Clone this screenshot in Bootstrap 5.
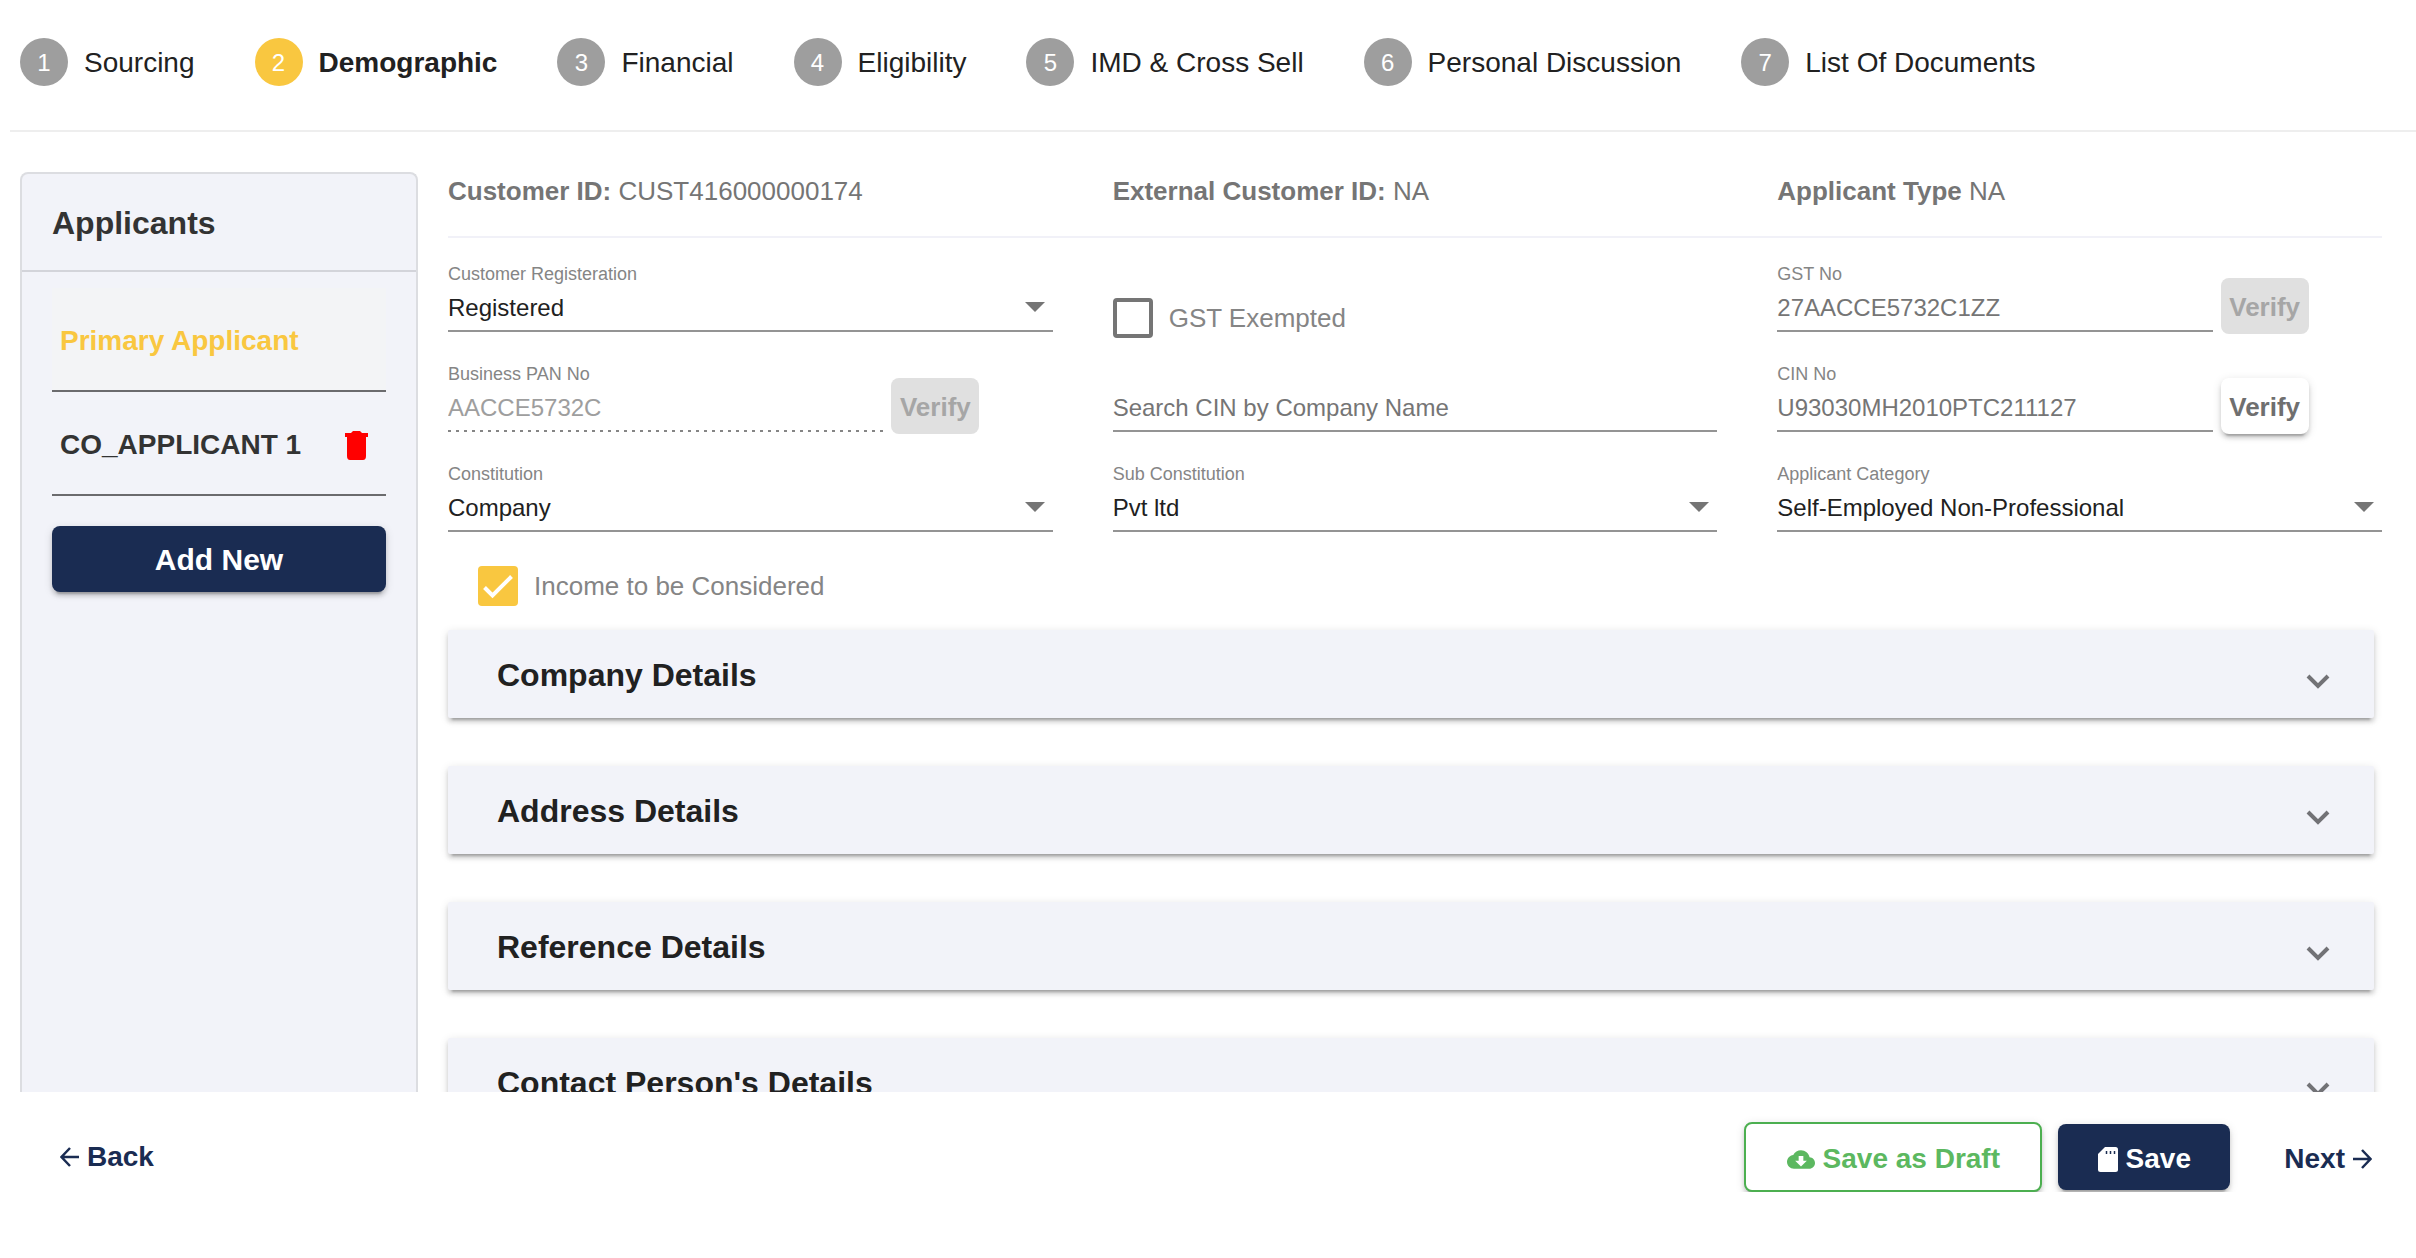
<!DOCTYPE html>
<html lang="en">
<head>
<meta charset="utf-8">
<meta name="viewport" content="width=device-width, initial-scale=1">
<title>Demographic</title>
<link href="https://cdn.jsdelivr.net/npm/bootstrap@5.3.0/dist/css/bootstrap.min.css" rel="stylesheet">
<style>
  :root { --navy: #1a2c52; --amber: #f9c740; --panel: #f2f3f9; --lift: 0 6px 2px -4px rgba(0,0,0,.2), 0 4px 4px 0 rgba(0,0,0,.14), 0 2px 10px 0 rgba(0,0,0,.12); }
  body { font-family: "Liberation Sans", Arial, sans-serif; color: #212121; background: #fff; }
  .stepper { height: 132px; margin-left: 10px; padding: 0 10px 6px; gap: 60px; border-bottom: 2px solid #eee; }
  .step-link { gap: 16px; font-size: 28px; line-height: 32px; color: #212121; text-decoration: none; white-space: nowrap; }
  .step-label { padding-top: 2px; }
  .step-num { width: 48px; height: 48px; padding-top: 2px; border-radius: 50%; background: #9e9e9e; color: #fff; font-size: 24px; }
  .step-link.active { font-weight: 700; }
  .step-link.active .step-num { background: var(--amber); font-weight: 400; }
  .workspace { padding: 40px 34px 0 20px; gap: 30px; min-height: 0; }
  .applicants { width: 398px; background: var(--panel); border: 2px solid #dcdde1; border-radius: 8px 8px 0 0; border-bottom: 0; }
  .applicants h2 { font-size: 32px; line-height: 36px; font-weight: 700; color: #333; padding: 31px 30px 29px; margin: 0; border-bottom: 2px solid #d3d4da; }
  .applicant-list { padding: 16px 30px 0; }
  .applicant-item { height: 104px; padding: 4px 18px 0 8px; border-bottom: 2px solid #6b6b6e; font-size: 28px; font-weight: 700; color: #333; }
  .applicant-item a { color: inherit; text-decoration: none; }
  .applicant-item.current { color: var(--amber); background: #f3f4f6; }
  .raised { border: 0; border-radius: 8px; box-shadow: var(--lift); font-weight: 700; font-size: 28px; line-height: 32px; }
  .navy-btn, .navy-btn:hover { background: var(--navy); color: #fff; height: 66px; }
  .add-btn { margin-top: 30px; padding-top: 8px; font-size: 30px; }
  .id-line { font-size: 26px; line-height: 30px; color: #757575; padding: 4px 0 30px; border-bottom: 2px solid #f1f1f8; }
  .wide-gutter { --bs-gutter-x: 60px; }
  .field-row { height: 100px; padding-top: 26px; }
  .field-row label.top { display: block; font-size: 18px; line-height: 20px; color: #858585; margin-bottom: 6px; }
  .field-row .line-field { display: block; width: 100%; height: 42px; padding: 0 0 4px; border: 0; border-bottom: 2px solid #949494; border-radius: 0; background-color: transparent; font-size: 24px; line-height: 28px; color: #757575; box-shadow: none; }
  .line-field::placeholder { color: #757575; opacity: 1; }
  .field-row select.line-field { color: #212121; appearance: none; background: url("data:image/svg+xml,%3Csvg xmlns='http://www.w3.org/2000/svg' viewBox='0 0 20 10'%3E%3Cpath d='M0 0h20L10 10z' fill='%23757575'/%3E%3C/svg%3E") no-repeat right 8px top 12px / 20px 10px; }
  .field-row .line-field:disabled { color: #9e9e9e; border-bottom: 0; padding-bottom: 6px; opacity: 1; background: repeating-linear-gradient(90deg, #858585 0 3px, transparent 3px 8px) left bottom / 100% 2px no-repeat; }
  .with-btn { width: 72%; }
  .verify-btn { width: 88px; height: 56px; margin-top: 14px; padding: 2px 0 0; font-size: 26px; color: #6f6f6f; background: #fff; }
  .verify-btn:disabled { background: #e0e0e0; color: #a6a6a6; box-shadow: none; opacity: 1; border: 0; }
  .tick-line { gap: 16px; font-size: 26px; line-height: 30px; color: #858585; }
  .exempt { padding-top: 34px; }
  .tick-box { width: 40px; height: 40px; margin: 0; border: 4px solid #757575; flex: none; }
  .tick-box.form-check-input[type=checkbox] { border-radius: 4px; }
  .tick-box.form-check-input:checked { border: 0; background: var(--amber) url("data:image/svg+xml,%3Csvg xmlns='http://www.w3.org/2000/svg' viewBox='0 0 40 40'%3E%3Cpath d='M6.500 21.500L14.500 29.500L33.500 10.500' fill='none' stroke='%23fff' stroke-width='4'/%3E%3C/svg%3E") center / 100% no-repeat; }
  .income { padding: 28px 30px 24px; }
  .section-btn { height: 88px; margin: 0 8px 48px 0; padding: 2px 44px 0 49px; border: 0; border-radius: 2px; background: var(--panel); box-shadow: var(--lift); font-size: 32px; line-height: 36px; font-weight: 700; color: #212121; flex: none; }
  .section-btn svg { margin-top: 14px; }
  .actions { height: 100px; margin-bottom: 66px; padding: 30px 44px 0 60px; flex: none; }
  .text-link { gap: 8px; font-size: 28px; line-height: 32px; font-weight: 700; color: var(--navy); text-decoration: none; }
  .draft-btn, .draft-btn:hover { height: 70px; width: 298px; border: 2px solid #4caf50; background: #fff; color: #5cb860; }
  .draft-btn, .save-btn { padding-top: 10px; }
  .save-btn { width: 172px; }
  .next-link { margin-left: 54px; padding-top: 4px; }
</style>
</head>
<body>
<div class="d-flex flex-column vh-100 overflow-hidden">
  <nav class="stepper d-flex align-items-center flex-shrink-0" aria-label="Steps">
    <a href="#" class="step-link d-flex align-items-center"><span class="step-num d-flex align-items-center justify-content-center">1</span><span class="step-label">Sourcing</span></a>
    <a href="#" class="step-link active d-flex align-items-center"><span class="step-num d-flex align-items-center justify-content-center">2</span><span class="step-label">Demographic</span></a>
    <a href="#" class="step-link d-flex align-items-center"><span class="step-num d-flex align-items-center justify-content-center">3</span><span class="step-label">Financial</span></a>
    <a href="#" class="step-link d-flex align-items-center"><span class="step-num d-flex align-items-center justify-content-center">4</span><span class="step-label">Eligibility</span></a>
    <a href="#" class="step-link d-flex align-items-center"><span class="step-num d-flex align-items-center justify-content-center">5</span><span class="step-label">IMD &amp; Cross Sell</span></a>
    <a href="#" class="step-link d-flex align-items-center"><span class="step-num d-flex align-items-center justify-content-center">6</span><span class="step-label">Personal Discussion</span></a>
    <a href="#" class="step-link d-flex align-items-center"><span class="step-num d-flex align-items-center justify-content-center">7</span><span class="step-label">List Of Documents</span></a>
  </nav>

  <div class="workspace d-flex flex-grow-1 overflow-hidden">
    <aside class="applicants flex-shrink-0">
      <h2>Applicants</h2>
      <div class="applicant-list">
        <div class="applicant-item current d-flex align-items-center"><a href="#">Primary Applicant</a></div>
        <div class="applicant-item d-flex align-items-center justify-content-between">
          <a href="#">CO_APPLICANT 1</a>
          <button type="button" class="btn p-0 border-0 d-flex" aria-label="Delete applicant">
            <svg width="23" height="29" viewBox="0 0 23 29" fill="#f00"><path d="M0 2H6L8 0H15L17 2H23V6H21V25Q21 29 18 29H5Q2 29 2 25V6H0Z"/></svg>
          </button>
        </div>
        <button type="button" class="btn raised navy-btn add-btn w-100">Add New</button>
      </div>
    </aside>

    <main class="flex-grow-1 d-flex flex-column">
      <div class="id-line">
        <div class="row wide-gutter row-cols-3">
          <div class="col"><b>Customer ID:</b> CUST416000000174</div>
          <div class="col"><b>External Customer ID:</b> NA</div>
          <div class="col"><b>Applicant Type</b> NA</div>
        </div>
      </div>

      <form>
        <div class="row wide-gutter row-cols-3">
          <div class="col"><div class="field-row">
            <label class="top" for="reg">Customer Registeration</label>
            <select id="reg" class="line-field"><option>Registered</option></select>
          </div></div>
          <div class="col"><div class="field-row">
            <div class="tick-line exempt d-flex align-items-center">
              <input type="checkbox" id="gstex" class="form-check-input tick-box"><label for="gstex">GST Exempted</label>
            </div>
          </div></div>
          <div class="col"><div class="field-row d-flex align-items-start gap-2">
            <div class="with-btn"><label class="top" for="gst">GST No</label>
            <input id="gst" class="line-field" value="27AACCE5732C1ZZ"></div>
            <button type="button" class="btn raised verify-btn" disabled>Verify</button>
          </div></div>

          <div class="col"><div class="field-row d-flex align-items-start gap-2">
            <div class="with-btn"><label class="top" for="pan">Business PAN No</label>
            <input id="pan" class="line-field" value="AACCE5732C" disabled></div>
            <button type="button" class="btn raised verify-btn" disabled>Verify</button>
          </div></div>
          <div class="col"><div class="field-row">
            <label class="top invisible" for="search">Search</label>
            <input id="search" class="line-field" placeholder="Search CIN by Company Name">
          </div></div>
          <div class="col"><div class="field-row d-flex align-items-start gap-2">
            <div class="with-btn"><label class="top" for="cin">CIN No</label>
            <input id="cin" class="line-field" value="U93030MH2010PTC211127"></div>
            <button type="button" class="btn raised verify-btn">Verify</button>
          </div></div>

          <div class="col"><div class="field-row">
            <label class="top" for="con">Constitution</label>
            <select id="con" class="line-field"><option>Company</option></select>
          </div></div>
          <div class="col"><div class="field-row">
            <label class="top" for="sub">Sub Constitution</label>
            <select id="sub" class="line-field"><option>Pvt ltd</option></select>
          </div></div>
          <div class="col"><div class="field-row">
            <label class="top" for="cat">Applicant Category</label>
            <select id="cat" class="line-field"><option>Self-Employed Non-Professional</option></select>
          </div></div>
        </div>
        <div class="income tick-line d-flex align-items-center">
          <input type="checkbox" id="income" class="form-check-input tick-box" checked><label for="income">Income to be Considered</label>
        </div>
      </form>

      <button type="button" class="section-btn d-flex align-items-center justify-content-between">Company Details<svg width="24" height="16" viewBox="0 0 24 16" fill="none" stroke="#727276" stroke-width="4"><path d="M2 2L12 12L22 2"/></svg></button>
      <button type="button" class="section-btn d-flex align-items-center justify-content-between">Address Details<svg width="24" height="16" viewBox="0 0 24 16" fill="none" stroke="#727276" stroke-width="4"><path d="M2 2L12 12L22 2"/></svg></button>
      <button type="button" class="section-btn d-flex align-items-center justify-content-between">Reference Details<svg width="24" height="16" viewBox="0 0 24 16" fill="none" stroke="#727276" stroke-width="4"><path d="M2 2L12 12L22 2"/></svg></button>
      <button type="button" class="section-btn d-flex align-items-center justify-content-between">Contact Person's Details<svg width="24" height="16" viewBox="0 0 24 16" fill="none" stroke="#727276" stroke-width="4"><path d="M2 2L12 12L22 2"/></svg></button>
    </main>
  </div>

  <footer class="actions d-flex align-items-center overflow-hidden">
    <a href="#" class="text-link d-flex align-items-center me-auto"><svg width="19" height="20" viewBox="0 0 19 20" fill="none" stroke="#1a2c52" stroke-width="2.500"><path d="M19 10H2M10 1L1.500 10L10 19"/></svg>Back</a>
    <div class="d-flex align-items-center gap-3">
      <button type="button" class="btn raised draft-btn d-flex align-items-center justify-content-center gap-2"><svg width="28" height="19" viewBox="0 4 24 16" fill="#5cb860"><path d="M19.350 10.040C18.670 6.590 15.640 4 12 4 9.110 4 6.600 5.640 5.350 8.040 2.340 8.360 0 10.910 0 14c0 3.310 2.690 6 6 6h13c2.760 0 5-2.240 5-5 0-2.640-2.050-4.780-4.650-4.960zM17 13l-5 5-5-5h3V9h4v4h3z"/></svg>Save as Draft</button>
      <button type="button" class="btn raised navy-btn save-btn d-flex align-items-center justify-content-center gap-2"><svg width="20" height="25" viewBox="0 0 20 25"><path d="M7 0H17.500Q20 0 20 2.500V22.500Q20 25 17.500 25H2.500Q0 25 0 22.500V7Z" fill="#fff"/><path d="M8.500 4v3M12.500 4v3M16.500 4v3" stroke="#1a2c52" stroke-width="1.500"/></svg>Save</button>
    </div>
    <a href="#" class="text-link next-link d-flex align-items-center">Next<svg width="19" height="20" viewBox="0 0 19 20" fill="none" stroke="#1a2c52" stroke-width="2.500"><path d="M0 10H17M9 1L17.500 10L9 19"/></svg></a>
  </footer>
</div>
<script src="https://cdn.jsdelivr.net/npm/bootstrap@5.3.0/dist/js/bootstrap.bundle.min.js"></script>
</body>
</html>
